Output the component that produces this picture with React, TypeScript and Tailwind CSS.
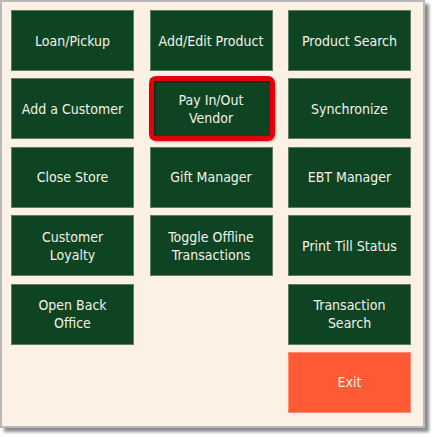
const buttons: (string | null)[] = [
  'Loan/Pickup',
  'Add/Edit Product',
  'Product Search',
  'Add a Customer',
  'Pay In/Out\nVendor',
  'Synchronize',
  'Close Store',
  'Gift Manager',
  'EBT Manager',
  'Customer\nLoyalty',
  'Toggle Offline\nTransactions',
  'Print Till Status',
  'Open Back\nOffice',
  null,
  'Transaction\nSearch',
  null,
  null,
  'Exit',
];

export default function App() {
  return (
    <div className="w-[434px] h-[437px] bg-white relative">
      <div
        className="w-[425px] h-[428px] bg-[#fdf1e6] border-2 border-[#b9b9b9] shadow-[4px_4px_3px_rgba(0,0,0,0.45)] pl-[9px] pt-[8px]"
        style={{ fontFamily: '"DejaVu Sans Condensed", Tahoma, "Liberation Sans", sans-serif' }}
      >
        <div className="grid grid-cols-[123px_123px_123px] auto-rows-[61px] gap-x-[15.5px] gap-y-[7.4px]">
          {buttons.map((label, i) => {
            if (label === null) return <div key={i} />;
            const exit = label === 'Exit';
            const selected = i === 4;
            return (
              <div
                key={i}
                className={`relative flex items-center justify-center text-center whitespace-pre-line text-[14px] leading-[18px] text-[#f2f2ea] border ${
                  exit ? 'bg-[#ff5936] border-[#ff8a70]' : 'bg-[#0f4422] border-[#5e7d63]'
                }`}
              >
                {label}
                {selected && (
                  <div className="absolute left-[-2px] top-[-3px] right-[-3px] bottom-[-3px] border-[5px] border-[#e4000a] rounded-[7px] shadow-[inset_1px_1px_2px_rgba(0,0,0,0.5),1px_1px_2px_rgba(0,0,0,0.3)]" />
                )}
              </div>
            );
          })}
        </div>
      </div>
    </div>
  );
}
